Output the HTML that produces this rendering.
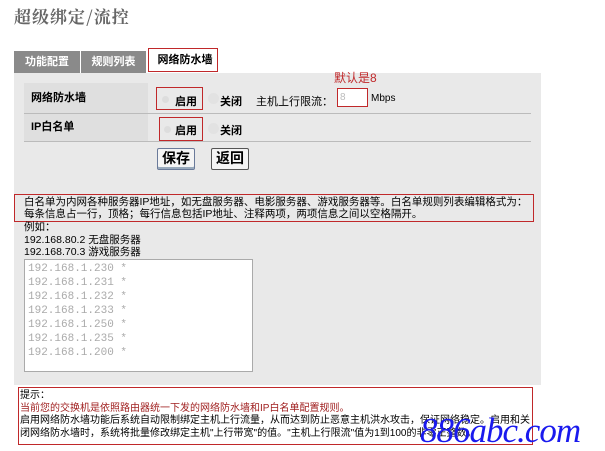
<!DOCTYPE html><html><head><meta charset="utf-8"><style>
body{margin:0;width:605px;height:448px;background:#fff;position:relative;overflow:hidden;font-family:"Liberation Sans","Noto Sans CJK SC",sans-serif;font-size:12px;color:#000}
.a{position:absolute}
.red{border:1.5px solid #c0282a;position:absolute;box-sizing:border-box}
.b{font-weight:bold}
</style></head><body>
<div class="a" style="left:14px;top:3px;font-size:17px;color:#666;font-weight:bold;letter-spacing:1px;font-family:'Noto Serif CJK SC',serif">超级绑定/流控</div>
<div class="a" style="left:14px;top:51px;width:66px;height:22px;background:#8a8a8a;color:#fff;font-weight:bold;font-size:11px;line-height:22px;text-align:center">功能配置</div>
<div class="a" style="left:81px;top:51px;width:65px;height:22px;background:#8a8a8a;color:#fff;font-weight:bold;font-size:11px;line-height:22px;text-align:center">规则列表</div>
<div class="a" style="left:147px;top:48px;width:76px;height:25px;background:#fff;font-weight:bold;font-size:11px;line-height:24px;text-align:center">网络防水墙</div>
<div class="red" style="left:148px;top:48px;width:70px;height:24px"></div>
<div class="a" style="left:14px;top:73px;width:527px;height:312px;background:#e9e9e9"></div>
<div class="a" style="left:24px;top:83px;width:124px;height:30px;background:#dfdfdf"></div>
<div class="a" style="left:24px;top:113px;width:124px;height:28px;background:#dfdfdf"></div>
<div class="a" style="left:24px;top:113px;width:507px;height:1px;background:#bbb"></div>
<div class="a" style="left:24px;top:141px;width:507px;height:1px;background:#bbb"></div>
<div class="a b" style="left:31px;top:89px;font-size:11px">网络防水墙</div>
<div class="a b" style="left:31px;top:118px;font-size:11px">IP白名单</div>
<div class="a" style="left:334px;top:69px;color:#c0282a">默认是8</div>
<div class="a" style="left:162px;top:96px;width:7px;height:7px;border-radius:50%;background:#ddd"></div>
<div class="a b" style="left:175px;top:93px;font-size:11px">启用</div>
<div class="a" style="left:208px;top:93px;width:11px;height:11px;border-radius:50%;background:#e2e2e2"></div>
<div class="a b" style="left:220px;top:93px;font-size:11px">关闭</div>
<div class="a" style="left:256px;top:93px;font-size:11px">主机上行限流：</div>
<div class="a" style="left:337px;top:89px;width:30px;height:17px;background:#fff;color:#bbb;font-size:10px;line-height:17px;padding-left:3px;box-sizing:border-box">8</div>
<div class="red" style="left:337px;top:88px;width:31px;height:19px"></div>
<div class="a" style="left:371px;top:93px;font-size:10px">Mbps</div>
<div class="red" style="left:156px;top:87px;width:47px;height:23px"></div>
<div class="a" style="left:164px;top:126px;width:7px;height:7px;border-radius:50%;background:#ddd"></div>
<div class="a b" style="left:175px;top:122px;font-size:11px">启用</div>
<div class="a" style="left:208px;top:123px;width:11px;height:11px;border-radius:50%;background:#e2e2e2"></div>
<div class="a b" style="left:220px;top:122px;font-size:11px">关闭</div>
<div class="red" style="left:159px;top:117px;width:44px;height:24px"></div>
<div class="a b" style="left:157px;top:148px;width:36px;height:20px;border:1px solid #6a7a9a;border-radius:2px;background:#f4f4f4;font-size:14px;line-height:19px;text-align:center;box-shadow:inset 0 -2px 0 #9ab">保存</div>
<div class="a b" style="left:211px;top:148px;width:36px;height:20px;border:1px solid #555;border-radius:2px;background:#f4f4f4;font-size:14px;line-height:19px;text-align:center">返回</div>
<div class="a" style="left:24px;top:196px;width:510px;font-size:10.5px;line-height:12px">白名单为内网各种服务器IP地址，如无盘服务器、电影服务器、游戏服务器等。白名单规则列表编辑格式为：每条信息占一行，顶格；每行信息包括IP地址、注释两项，两项信息之间以空格隔开。</div>
<div class="red" style="left:14px;top:194px;width:520px;height:28px"></div>
<div class="a" style="left:24px;top:221px;font-size:10.5px;line-height:12.5px">例如：<br>192.168.80.2 无盘服务器<br>192.168.70.3 游戏服务器</div>
<div class="a" style="left:24px;top:259px;width:229px;height:113px;background:#fff;border:1px solid #aaa;box-sizing:border-box"></div>
<div class="a" style="left:28px;top:262px;color:#aaa;font-family:'Liberation Mono',monospace;font-size:11px;line-height:14px">192.168.1.230 *<br>192.168.1.231 *<br>192.168.1.232 *<br>192.168.1.233 *<br>192.168.1.250 *<br>192.168.1.235 *<br>192.168.1.200 *</div>
<div class="a" style="left:20px;top:390px;font-size:10px;line-height:12.5px;width:510px">提示：<br><span style="color:#a02020">当前您的交换机是依照路由器统一下发的网络防水墙和IP白名单配置规则。</span><br>启用网络防水墙功能后系统自动限制绑定主机上行流量，从而达到防止恶意主机洪水攻击，保证网络稳定。启用和关闭网络防水墙时，系统将批量修改绑定主机"上行带宽"的值。"主机上行限流"值为1到100的非零正整数。</div>
<div class="red" style="left:18px;top:387px;width:515px;height:58px"></div>
<div class="a" style="left:420px;top:411px;font-size:35px;color:#1a1aee;font-style:italic;font-family:'Liberation Serif',serif;letter-spacing:-1px">886abc.com</div>
</body></html>
